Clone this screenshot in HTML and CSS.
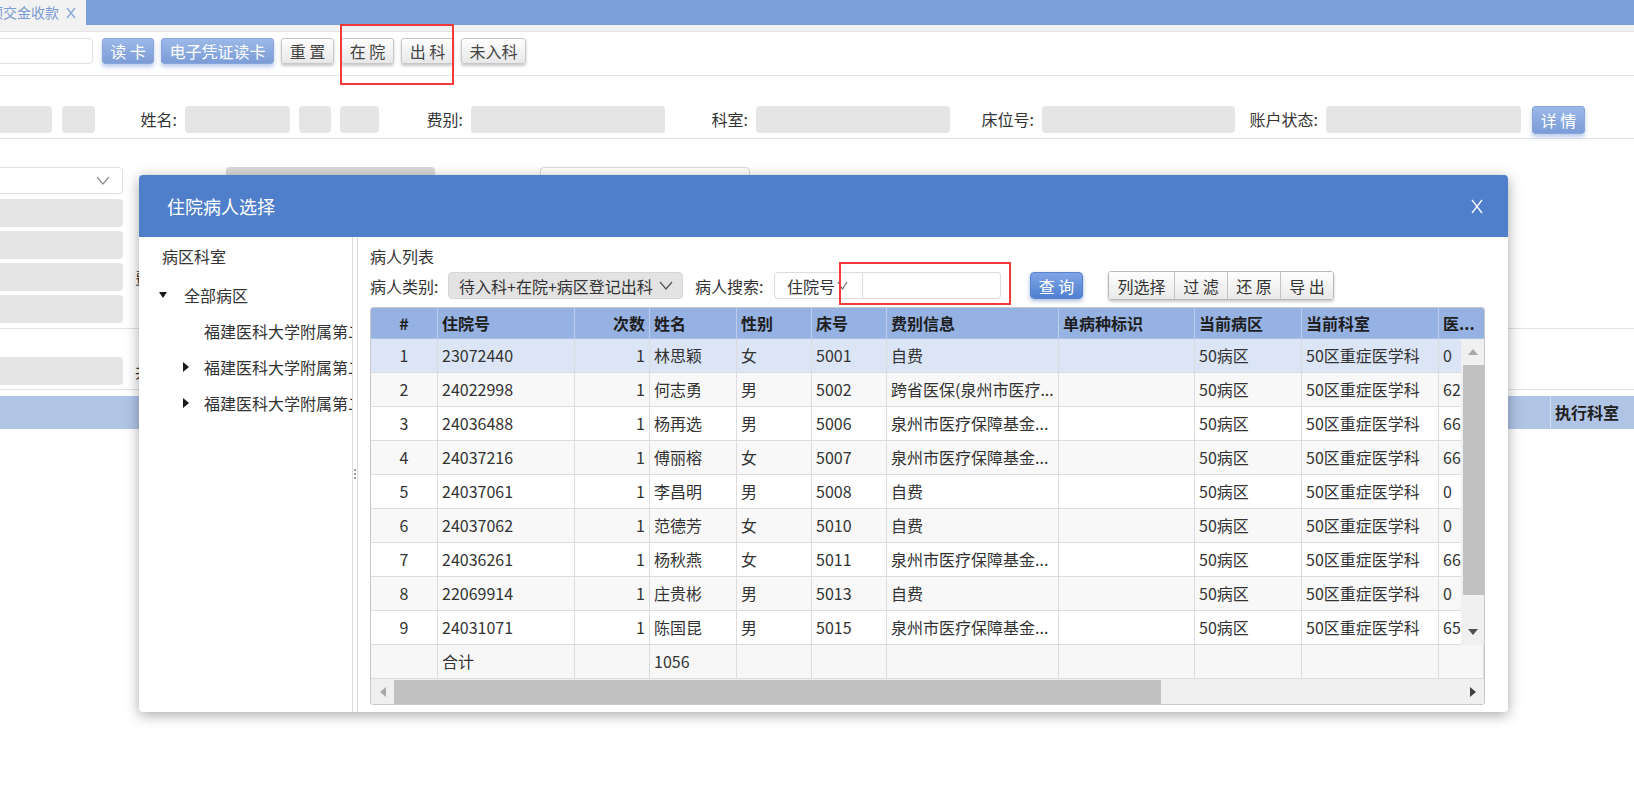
FILE: index.html
```html
<!DOCTYPE html>
<html>
  <head>
    <meta charset="utf-8">
    <link rel="stylesheet" href="styles.css">
  </head>
  <body>
    <div class="tabbar">
      <div class="tab">
        <span class="tab-title">预交金收款</span>
        <svg class="tab-close" width="10" height="12" viewBox="0 0 10 12"><path d="M1 1L9 11M9 1L1 11" stroke="#8aa6d6" stroke-width="1.3" fill="none"/></svg>
      </div>
    </div>
    <div class="tabstrip"></div>

    <div class="toolbar">
      <input class="card-input" type="text">
      <button class="btn btn-blue w52">读 卡</button>
      <button class="btn btn-blue w113">电子凭证读卡</button>
      <button class="btn btn-gray w53">重 置</button>
      <button class="btn btn-gray w53">在 院</button>
      <button class="btn btn-gray w53">出 科</button>
      <button class="btn btn-gray w65">未入科</button>
    </div>

    <div class="inforow">
      <div class="ginput first"></div>
      <div class="ginput w33 ml10"></div>
      <span class="info-lbl w90">姓名:</span>
      <div class="ginput w105"></div>
      <div class="ginput w32 ml9"></div>
      <div class="ginput w39 ml9"></div>
      <span class="info-lbl w92">费别:</span>
      <div class="ginput w194"></div>
      <span class="info-lbl w91">科室:</span>
      <div class="ginput w194"></div>
      <span class="info-lbl w92">床位号:</span>
      <div class="ginput w193"></div>
      <span class="info-lbl w91">账户状态:</span>
      <div class="ginput w195"></div>
      <button class="btn btn-blue detail">详 情</button>
    </div>

    <div class="section">
      <div class="lrow">
        <div class="dropdown">
          <svg width="14" height="9" viewBox="0 0 14 9"><path d="M1 1L7 8L13 1" stroke="#8c8c8c" stroke-width="1.2" fill="none"/></svg>
        </div>
        <div class="ghost-gray"></div>
        <div class="ghost-white"></div>
      </div>
      <div class="lrow"><div class="ginput wide"></div></div>
      <div class="lrow"><div class="ginput wide"></div></div>
      <div class="lrow"><div class="ginput wide"></div><span class="side-lbl">费用类型:</span></div>
      <div class="lrow"><div class="ginput wide"></div></div>
    </div>

    <div class="section2">
      <div class="lrow"><div class="ginput wide"></div><span class="side-lbl">共计:</span></div>
    </div>

    <div class="blue-bar">
      <div class="bar-fill"></div>
      <div class="bar-head">执行科室</div>
    </div>

    <div class="mark mark-top"></div>

    <div class="dialog">
      <div class="dlg-head">
        <span class="dlg-title">住院病人选择</span>
        <svg width="12" height="15" viewBox="0 0 12 15"><path d="M1 1L11 14M11 1L1 14" stroke="#fff" stroke-width="1.3" fill="none"/></svg>
      </div>
      <div class="dlg-body">
        <div class="ward-pane">
          <div class="pane-title indent">病区科室</div>
          <div class="tree">
            <div class="node lvl0"><span class="caret"><i class="tri-down"></i></span><span class="node-text">全部病区</span></div>
            <div class="node lvl1"><span class="caret"></span><span class="node-text">福建医科大学附属第二</span></div>
            <div class="node lvl1"><span class="caret"><i class="tri-right"></i></span><span class="node-text">福建医科大学附属第二</span></div>
            <div class="node lvl1"><span class="caret"><i class="tri-right"></i></span><span class="node-text">福建医科大学附属第二</span></div>
          </div>
        </div>
        <div class="splitter"><span class="grip"></span></div>
        <div class="list-pane">
          <div class="pane-title">病人列表</div>
          <div class="filter">
            <span class="flt-lbl w78">病人类别:</span>
            <div class="sel-gray">
              <span>待入科+在院+病区登记出科</span>
              <svg width="14" height="9" viewBox="0 0 14 9"><path d="M1 1L7 8L13 1" stroke="#555" stroke-width="1.2" fill="none"/></svg>
            </div>
            <span class="flt-lbl w79 ml12">病人搜索:</span>
            <div class="search">
              <div class="search-type">住院号<svg width="11" height="9" viewBox="0 0 11 9"><path d="M1 1L5.5 8L10 1" stroke="#666" stroke-width="1.1" fill="none"/></svg></div>
              <input class="search-input" type="text">
            </div>
            <button class="btn-query">查 询</button>
            <div class="btn-group">
              <button class="seg w65">列选择</button>
              <button class="seg w53">过 滤</button>
              <button class="seg w53">还 原</button>
              <button class="seg w53">导 出</button>
            </div>
          </div>

          <div class="grid">
            <div class="row head">
              <div class="cell center">#</div>
              <div class="cell">住院号</div>
              <div class="cell right">次数</div>
              <div class="cell">姓名</div>
              <div class="cell">性别</div>
              <div class="cell">床号</div>
              <div class="cell">费别信息</div>
              <div class="cell">单病种标识</div>
              <div class="cell">当前病区</div>
              <div class="cell">当前科室</div>
              <div class="cell last">医...</div>
            </div>
            <div class="grid-mid">
              <div class="grid-rows">
                <div class="row sel">
                  <div class="cell center">1</div><div class="cell">23072440</div><div class="cell right">1</div><div class="cell">林思颖</div><div class="cell">女</div><div class="cell">5001</div><div class="cell">自费</div><div class="cell"></div><div class="cell">50病区</div><div class="cell">50区重症医学科</div><div class="cell">0</div>
                </div>
                <div class="row alt">
                  <div class="cell center">2</div><div class="cell">24022998</div><div class="cell right">1</div><div class="cell">何志勇</div><div class="cell">男</div><div class="cell">5002</div><div class="cell">跨省医保(泉州市医疗...</div><div class="cell"></div><div class="cell">50病区</div><div class="cell">50区重症医学科</div><div class="cell">6273.5</div>
                </div>
                <div class="row">
                  <div class="cell center">3</div><div class="cell">24036488</div><div class="cell right">1</div><div class="cell">杨再选</div><div class="cell">男</div><div class="cell">5006</div><div class="cell">泉州市医疗保障基金...</div><div class="cell"></div><div class="cell">50病区</div><div class="cell">50区重症医学科</div><div class="cell">6660.2</div>
                </div>
                <div class="row alt">
                  <div class="cell center">4</div><div class="cell">24037216</div><div class="cell right">1</div><div class="cell">傅丽榕</div><div class="cell">女</div><div class="cell">5007</div><div class="cell">泉州市医疗保障基金...</div><div class="cell"></div><div class="cell">50病区</div><div class="cell">50区重症医学科</div><div class="cell">6671.0</div>
                </div>
                <div class="row">
                  <div class="cell center">5</div><div class="cell">24037061</div><div class="cell right">1</div><div class="cell">李昌明</div><div class="cell">男</div><div class="cell">5008</div><div class="cell">自费</div><div class="cell"></div><div class="cell">50病区</div><div class="cell">50区重症医学科</div><div class="cell">0</div>
                </div>
                <div class="row alt">
                  <div class="cell center">6</div><div class="cell">24037062</div><div class="cell right">1</div><div class="cell">范德芳</div><div class="cell">女</div><div class="cell">5010</div><div class="cell">自费</div><div class="cell"></div><div class="cell">50病区</div><div class="cell">50区重症医学科</div><div class="cell">0</div>
                </div>
                <div class="row">
                  <div class="cell center">7</div><div class="cell">24036261</div><div class="cell right">1</div><div class="cell">杨秋燕</div><div class="cell">女</div><div class="cell">5011</div><div class="cell">泉州市医疗保障基金...</div><div class="cell"></div><div class="cell">50病区</div><div class="cell">50区重症医学科</div><div class="cell">6641.8</div>
                </div>
                <div class="row alt">
                  <div class="cell center">8</div><div class="cell">22069914</div><div class="cell right">1</div><div class="cell">庄贵彬</div><div class="cell">男</div><div class="cell">5013</div><div class="cell">自费</div><div class="cell"></div><div class="cell">50病区</div><div class="cell">50区重症医学科</div><div class="cell">0</div>
                </div>
                <div class="row">
                  <div class="cell center">9</div><div class="cell">24031071</div><div class="cell right">1</div><div class="cell">陈国昆</div><div class="cell">男</div><div class="cell">5015</div><div class="cell">泉州市医疗保障基金...</div><div class="cell"></div><div class="cell">50病区</div><div class="cell">50区重症医学科</div><div class="cell">6524.4</div>
                </div>
              </div>
              <div class="vscroll">
                <div class="vs-btn"><i class="tri-up"></i></div>
                <div class="vs-thumb"></div>
                <div class="vs-space"></div>
                <div class="vs-btn"><i class="tri-dn"></i></div>
              </div>
            </div>
            <div class="row foot">
              <div class="cell"></div><div class="cell">合计</div><div class="cell"></div><div class="cell">1056</div><div class="cell"></div><div class="cell"></div><div class="cell"></div><div class="cell"></div><div class="cell"></div><div class="cell"></div><div class="cell last"></div>
            </div>
            <div class="hscroll">
              <div class="hs-btn"><i class="tri-lt"></i></div>
              <div class="hs-thumb"></div>
              <div class="hs-space"></div>
              <div class="hs-btn"><i class="tri-rt"></i></div>
            </div>
          </div>
        </div>
      </div>
    </div>

    <div class="mark mark-search"></div>
  </body>
</html>
```

FILE: styles.css
```css
body {
  margin: 0;
  width: 1634px;
  height: 809px;
  overflow: hidden;
  position: relative;
  background: #fff;
  color: #333;
  font-family: "Noto Sans CJK SC", "Noto Sans", sans-serif;
  font-size: 16px;
}

button,
input {
  font-family: inherit;
  font-size: 16px;
  margin: 0;
}

/* ---- tab strip ---- */
.tabbar {
  height: 25px;
  background: #7c9fd9;
  display: flex;
}

.tab {
  width: 86px;
  background: #f2f2f2;
  display: flex;
  align-items: center;
  overflow: hidden;
  white-space: nowrap;
}

.tab-title {
  margin-left: -11px;
  font-size: 14px;
  line-height: 25px;
  color: #7b9bd3;
}

.tab-close {
  margin-left: 7px;
  flex-shrink: 0;
}

.tabstrip {
  height: 6px;
  background: #f2f2f2;
  border-bottom: 1px solid #e3e3e3;
}

/* ---- toolbar ---- */
.toolbar {
  height: 44px;
  box-sizing: border-box;
  padding-top: 6px;
  display: flex;
  align-items: flex-start;
  gap: 7px;
  border-bottom: 1px solid #e4e4e4;
}

.card-input {
  margin-left: -20px;
  margin-right: 2px;
  width: 113px;
  height: 26px;
  box-sizing: border-box;
  border: 1px solid #e0e0e0;
  border-radius: 4px;
}

.btn {
  height: 26px;
  padding: 0;
  line-height: 24px;
  border-radius: 3px;
  white-space: nowrap;
}

.btn-gray {
  background: linear-gradient(#fefefe, #e8e8e8);
  border: 1px solid #c8c8c8;
  color: #444;
  box-shadow: 0 2px 3px rgba(0, 0, 0, 0.22);
}

.btn-blue {
  background: linear-gradient(#9bb8e8, #7c9cd8);
  border: 1px solid #88a6dc;
  color: #fff;
  box-shadow: 0 3px 4px rgba(90, 130, 200, 0.4);
}

.w52 { width: 52px; }
.w53 { width: 53px; }
.w65 { width: 65px; }
.w113 { width: 113px; }

/* ---- patient info row ---- */
.inforow {
  height: 63px;
  box-sizing: border-box;
  padding-top: 30px;
  display: flex;
  align-items: flex-start;
  border-bottom: 1px solid #e2e2e2;
}

.ginput {
  height: 27px;
  background: #e5e5e5;
  border-radius: 4px;
  flex-shrink: 0;
}

.ginput.first { width: 62px; margin-left: -10px; }
.w32 { width: 32px; }
.w33 { width: 33px; }
.w39 { width: 39px; }
.w105 { width: 105px; }
.w193 { width: 193px; }
.w194 { width: 194px; }
.w195 { width: 195px; }
.ml9 { margin-left: 9px; }
.ml10 { margin-left: 10px; }
.ml12 { margin-left: 12px; }

.info-lbl {
  box-sizing: border-box;
  padding-right: 8px;
  text-align: right;
  line-height: 27px;
  white-space: nowrap;
  flex-shrink: 0;
}

.w90 { width: 90px; }
.w91 { width: 91px; }
.w92 { width: 92px; }

.detail {
  margin-left: 11px;
  width: 53px;
  height: 28px;
  line-height: 26px;
}

/* ---- left form behind dialog ---- */
.section {
  padding: 28px 0 5px;
  border-bottom: 1px solid #e2e2e2;
  display: flex;
  flex-direction: column;
  gap: 4px;
}

.section .lrow:first-child {
  margin-bottom: 1px;
}

.section2 {
  padding: 28px 0 4px;
  border-bottom: 1px solid #e2e2e2;
}

.lrow {
  display: flex;
  align-items: center;
}

.ginput.wide {
  width: 133px;
  height: 28px;
  margin-left: -10px;
}

.side-lbl {
  margin-left: 12px;
  white-space: nowrap;
}

.dropdown {
  width: 133px;
  height: 27px;
  margin-left: -10px;
  box-sizing: border-box;
  border: 1px solid #e0e0e0;
  border-radius: 4px;
  display: flex;
  align-items: center;
  justify-content: flex-end;
  padding-right: 12px;
}

.ghost-gray {
  margin-left: 103px;
  width: 209px;
  height: 27px;
  background: #d9d9d9;
  border-radius: 4px;
}

.ghost-white {
  margin-left: 105px;
  width: 210px;
  height: 27px;
  box-sizing: border-box;
  border: 1px solid #dcdcdc;
  border-radius: 4px;
}

.blue-bar {
  margin-top: 6px;
  height: 33px;
  background: #b0c4e6;
  display: flex;
}

.bar-fill {
  flex: 1;
}

.bar-head {
  width: 79px;
  border-left: 1px solid #d3def2;
  padding-left: 4px;
  line-height: 33px;
  font-weight: bold;
  color: #222;
}

/* ---- red annotation boxes ---- */
.mark {
  position: absolute;
  box-sizing: border-box;
  border: 2px solid #f23a3a;
  z-index: 5;
}

.mark-top {
  left: 340px;
  top: 24px;
  width: 114px;
  height: 61px;
}

.mark-search {
  left: 839px;
  top: 262px;
  width: 172px;
  height: 43px;
}

/* ---- dialog ---- */
.dialog {
  position: absolute;
  left: 139px;
  top: 175px;
  width: 1369px;
  height: 537px;
  background: #fff;
  border-radius: 4px;
  box-shadow: 0 3px 14px rgba(0, 0, 0, 0.35);
  overflow: hidden;
  z-index: 2;
}

.dlg-head {
  height: 62px;
  background: #4f7fca;
  display: flex;
  align-items: center;
  justify-content: space-between;
  padding: 0 25px 0 28px;
  color: #fff;
  font-size: 18px;
}

.dlg-body {
  display: flex;
  height: 475px;
}

.ward-pane {
  width: 214px;
  box-sizing: border-box;
  border-right: 1px solid #dcdcdc;
  padding: 8px 0 0 20px;
  overflow: hidden;
  white-space: nowrap;
}

.pane-title {
  line-height: 22px;
}

.pane-title.indent {
  margin-left: 3px;
}

.tree {
  margin-top: 10px;
}

.node {
  height: 36px;
  display: flex;
  align-items: center;
  overflow: hidden;
}

.node-text {
  flex: 1;
  min-width: 0;
  overflow: hidden;
  white-space: nowrap;
}

.caret {
  display: inline-flex;
  align-items: center;
  flex-shrink: 0;
}

.lvl0 .caret { width: 25px; }
.lvl1 { padding-left: 24px; }
.lvl1 .caret { width: 21px; }

.tri-down {
  border-left: 4.5px solid transparent;
  border-right: 4.5px solid transparent;
  border-top: 6px solid #1a1a1a;
}

.tri-right {
  border-top: 5px solid transparent;
  border-bottom: 5px solid transparent;
  border-left: 6px solid #1a1a1a;
}

.splitter {
  width: 4px;
  border-right: 1px solid #dcdcdc;
  display: flex;
  align-items: center;
  justify-content: center;
}

.grip {
  width: 2px;
  height: 12px;
  background: repeating-linear-gradient(#9a9a9a 0 2px, transparent 2px 4px);
}

.list-pane {
  flex: 1;
  padding: 8px 0 0 12px;
}

.filter {
  margin-top: 5px;
  height: 27px;
  display: flex;
  align-items: center;
}

.flt-lbl {
  white-space: nowrap;
  flex-shrink: 0;
}

.w78 { width: 78px; }
.w79 { width: 79px; }

.sel-gray {
  width: 235px;
  height: 27px;
  box-sizing: border-box;
  background: #e3e3e3;
  border: 1px solid #d6d6d6;
  border-radius: 4px;
  padding: 0 9px 0 10px;
  display: flex;
  align-items: center;
  justify-content: space-between;
  white-space: nowrap;
}

.search {
  display: flex;
  height: 27px;
}

.search-type {
  width: 89px;
  box-sizing: border-box;
  border: 1px solid #dcdcdc;
  border-radius: 4px 0 0 4px;
  padding-left: 12px;
  display: flex;
  align-items: center;
  gap: 2px;
  white-space: nowrap;
}

.search-input {
  width: 138px;
  height: 27px;
  box-sizing: border-box;
  border: 1px solid #dcdcdc;
  border-left: none;
  border-radius: 0 4px 4px 0;
}

.btn-query {
  margin-left: 29px;
  width: 53px;
  height: 27px;
  padding: 0;
  border: 1px solid #5483d0;
  border-radius: 4px;
  background: linear-gradient(#80a5e6, #4f7fd0);
  color: #fff;
  box-shadow: 0 2px 4px rgba(60, 100, 180, 0.45);
}

.btn-group {
  margin-left: 25px;
  display: flex;
  height: 27px;
  border: 1px solid #b8b8b8;
  border-radius: 3px;
  box-shadow: 0 2px 3px rgba(0, 0, 0, 0.2);
  overflow: hidden;
}

.seg {
  height: 100%;
  padding: 0;
  border: none;
  border-left: 1px solid #c3c3c3;
  background: linear-gradient(#fefefe, #e9e9e9);
  color: #333;
  white-space: nowrap;
}

.seg:first-child {
  border-left: none;
}

/* ---- patient grid ---- */
.grid {
  margin-top: 8px;
  width: 1115px;
  box-sizing: border-box;
  border: 1px solid #c9c9c9;
  border-radius: 3px;
  overflow: hidden;
}

.row {
  display: grid;
  grid-template-columns: 67px 137px 75px 87px 75px 75px 172px 136px 107px 137px 90px;
  height: 34px;
  overflow: hidden;
}

.cell {
  box-sizing: border-box;
  border-right: 1px solid #dcdcdc;
  border-bottom: 1px solid #dcdcdc;
  padding: 0 4px;
  line-height: 33px;
  white-space: nowrap;
  overflow: hidden;
}

.center { text-align: center; }
.right { text-align: right; }

.row.head {
  height: 31px;
  background: #95b2e2;
  grid-template-columns: 67px 137px 75px 87px 75px 75px 172px 136px 107px 137px 46px;
}

.head .cell {
  line-height: 30px;
  font-weight: bold;
  color: #1e1e1e;
  border-right-color: #bccdea;
  border-bottom-color: #a9bfe4;
}

.head .cell.last {
  border-right: none;
}

.grid-mid {
  display: flex;
}

.grid-rows {
  width: 1090px;
  overflow: hidden;
}

.row.sel { background: #dbe5f6; }
.row.alt { background: #f8f8f8; }

.row.foot {
  background: #f7f7f7;
  grid-template-columns: 67px 137px 75px 87px 75px 75px 172px 136px 107px 137px 45px;
}

.vscroll {
  width: 23px;
  height: 306px;
  background: #f0f0f0;
  display: flex;
  flex-direction: column;
}

.vs-btn {
  height: 26px;
  display: flex;
  align-items: center;
  justify-content: center;
}

.vs-thumb {
  height: 230px;
  margin-left: 2px;
  background: #c1c1c1;
}

.vs-space {
  flex: 1;
}

.tri-up {
  border-left: 5px solid transparent;
  border-right: 5px solid transparent;
  border-bottom: 6px solid #a8a8a8;
}

.tri-dn {
  border-left: 5px solid transparent;
  border-right: 5px solid transparent;
  border-top: 6px solid #505050;
}

.hscroll {
  height: 25px;
  background: #f0f0f0;
  display: flex;
  align-items: center;
}

.hs-btn {
  width: 23px;
  height: 100%;
  display: flex;
  align-items: center;
  justify-content: center;
}

.hs-thumb {
  width: 767px;
  height: 24px;
  background: #c1c1c1;
}

.hs-space {
  flex: 1;
}

.tri-lt {
  border-top: 5px solid transparent;
  border-bottom: 5px solid transparent;
  border-right: 6px solid #a8a8a8;
}

.tri-rt {
  border-top: 5px solid transparent;
  border-bottom: 5px solid transparent;
  border-left: 6px solid #404040;
}
```
